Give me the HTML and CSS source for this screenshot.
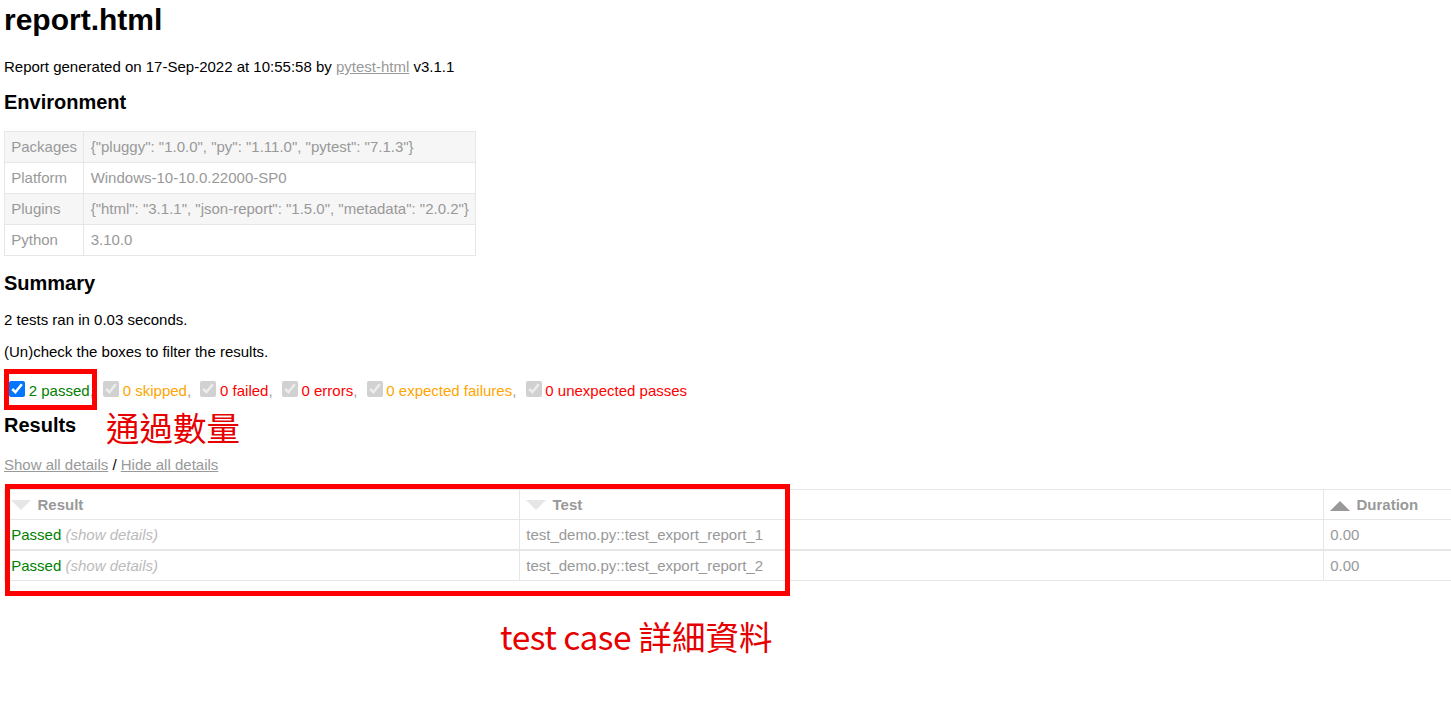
FILE: index.html
```html
<!DOCTYPE html>
<html lang="en">
<head>
<meta charset="utf-8">
<title>report.html</title>
<link rel="stylesheet" href="styles.css">
</head>
<body>
<h1>report.html</h1>
<p>Report generated on 17-Sep-2022 at 10:55:58 by <a href="#">pytest-html</a> v3.1.1</p>
<h2>Environment</h2>
<table id="environment">
<tr><td>Packages</td><td>{"pluggy": "1.0.0", "py": "1.11.0", "pytest": "7.1.3"}</td></tr>
<tr><td>Platform</td><td>Windows-10-10.0.22000-SP0</td></tr>
<tr><td>Plugins</td><td>{"html": "3.1.1", "json-report": "1.5.0", "metadata": "2.0.2"}</td></tr>
<tr><td>Python</td><td>3.10.0</td></tr>
</table>
<h2>Summary</h2>
<p>2 tests ran in 0.03 seconds. </p>
<p class="filter">(Un)check the boxes to filter the results.</p>
<div class="filters"><input class="filter" type="checkbox" checked><span class="passed">2 passed</span>, <input class="filter" type="checkbox" checked disabled><span class="skipped">0 skipped</span>, <input class="filter" type="checkbox" checked disabled><span class="failed">0 failed</span>, <input class="filter" type="checkbox" checked disabled><span class="error">0 errors</span>, <input class="filter" type="checkbox" checked disabled><span class="xfailed">0 expected failures</span>, <input class="filter" type="checkbox" checked disabled><span class="xpassed">0 unexpected passes</span></div>
<h2>Results</h2>
<p class="details"><a href="#">Show all details</a> / <a href="#">Hide all details</a></p>
<table id="results-table">
<colgroup><col class="c-result"><col class="c-test"><col class="c-duration"></colgroup>
<thead>
<tr>
<th class="sortable inactive"><div class="sort-icon"></div>Result</th>
<th class="sortable inactive"><div class="sort-icon"></div>Test</th>
<th class="sortable asc active"><div class="sort-icon"></div>Duration</th>
</tr>
</thead>
<tbody class="passed results-table-row">
<tr><td class="col-result">Passed <span class="expander">(show details)</span></td><td>test_demo.py::test_export_report_1</td><td>0.00</td></tr>
</tbody>
<tbody class="passed results-table-row second">
<tr><td class="col-result">Passed <span class="expander">(show details)</span></td><td>test_demo.py::test_export_report_2</td><td>0.00</td></tr>
</tbody>
</table>

<div class="mark mark-filter"></div>
<div class="mark mark-table"></div>
<div class="note note-filter">通過數量</div>
<div class="note note-table"><span class="latin">test case</span> 詳細資料</div>
</body>
</html>
```

FILE: styles.css
```css
html {
  overflow: hidden;
  background: #fff;
}

body {
  margin: 0;
  padding: 0 4px;
  font-family: "Liberation Sans", Arial, Helvetica, sans-serif;
  font-size: 15px;
  color: #999;
}

h1 {
  font-size: 30px;
  line-height: 34px;
  color: black;
  margin: 3px 0 21px;
}

h2 {
  font-size: 20px;
  line-height: 23px;
  color: black;
  margin: 16px 0 16.5px;
}

p {
  color: black;
  line-height: 17px;
  margin: 15px 0;
}

p.details {
  line-height: 21px;
  margin: 16.5px 0 14px;
}

a {
  color: #999;
}

table {
  border-collapse: collapse;
}

#environment td {
  padding: 6px 6.25px;
  line-height: 18px;
  border: 1px solid #e6e6e6;
  vertical-align: top;
}

#environment tr:nth-child(odd) {
  background-color: #f6f6f6;
}

.filters {
  box-sizing: border-box;
  height: 23px;
  padding-top: 6px;
  line-height: 17px;
}

input.filter {
  width: 16px;
  height: 16px;
  margin: 0 3.75px 0 5px;
  vertical-align: -1px;
}

span.passed,
.passed .col-result {
  color: green;
}

span.skipped,
span.xfailed {
  color: orange;
}

span.error,
span.failed,
span.xpassed {
  color: red;
}

#results-table {
  table-layout: fixed;
  width: 1600px;
  color: #999;
  font-size: 15px;
}

.c-result { width: 515px; }
.c-test { width: 804px; }
.c-duration { width: 281px; }

#results-table th,
#results-table td {
  padding: 6px 6.25px;
  line-height: 17px;
  border: 1px solid #e6e6e6;
  text-align: left;
  white-space: nowrap;
}

#results-table th {
  font-weight: bold;
}

#results-table .second td {
  border-top-width: 2px;
}

.sortable {
  cursor: pointer;
}

.sort-icon {
  font-size: 0;
  float: left;
  margin-right: 6.25px;
  margin-top: 4.5px;
  width: 0;
  height: 0;
  border-left: 10px solid transparent;
  border-right: 10px solid transparent;
}

.inactive .sort-icon {
  border-top: 10px solid #e6e6e6;
}

.asc.active .sort-icon {
  border-bottom: 10px solid #999;
  margin-top: 5.5px;
}

.expander {
  color: #bbb;
  font-style: italic;
  cursor: pointer;
}

.mark {
  position: absolute;
  box-sizing: border-box;
  border: 5px solid #f00;
}

.mark-filter {
  left: 4px;
  top: 369px;
  width: 93px;
  height: 41px;
}

.mark-table {
  left: 5px;
  top: 484px;
  width: 785px;
  height: 112px;
}

.note {
  position: absolute;
  color: #e60000;
  font-family: "Noto Sans CJK TC", "Noto Sans", sans-serif;
  font-size: 33.5px;
  line-height: 34px;
  white-space: nowrap;
}

.note .latin {
  letter-spacing: -0.5px;
}

.note-filter {
  left: 106px;
  top: 410px;
}

.note-table {
  left: 500px;
  top: 619px;
}
```
